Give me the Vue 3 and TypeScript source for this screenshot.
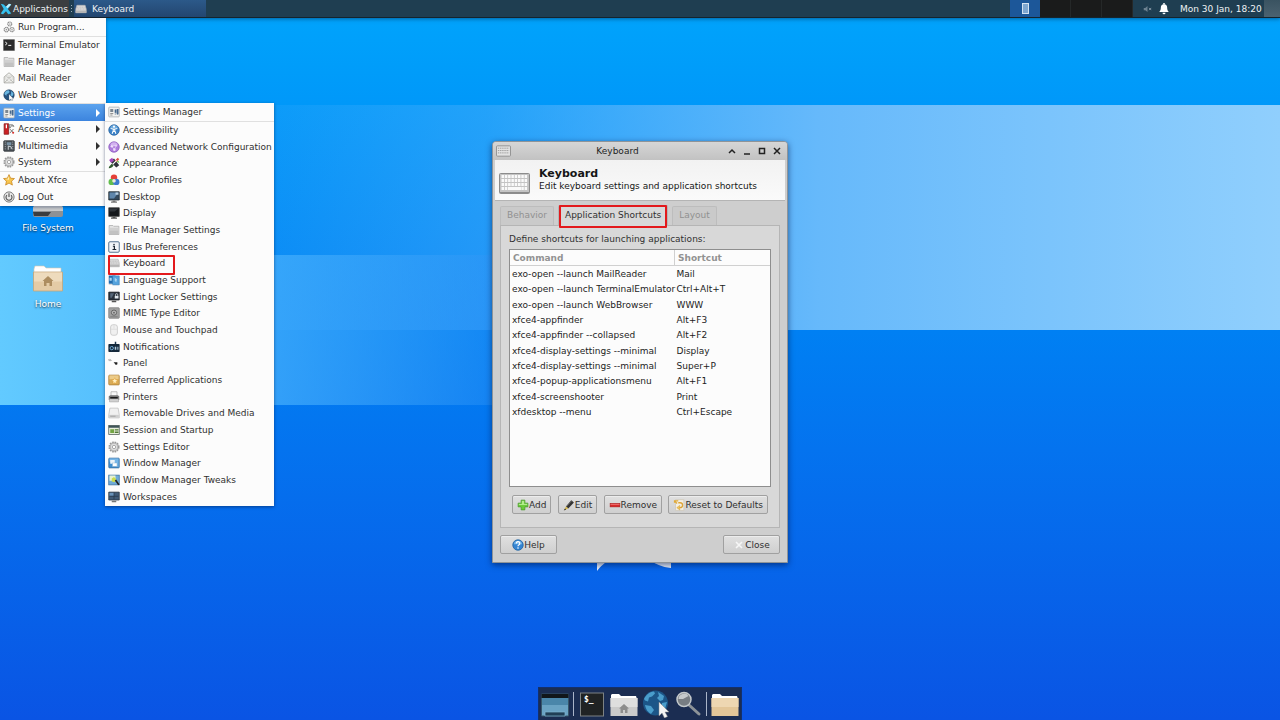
<script setup lang="ts">
import { ref } from 'vue'

interface MenuEntry {
  label: string
  icon: string
  submenu?: boolean
  divider?: boolean
  marked?: boolean
}

const folder = '<path d="M1.500 2h5l1 1h7v11h-13z" fill="#e4e4e4" stroke="#a9a9a9"/><path d="M2 5h12v8.500H2z" fill="#d0d0d0"/><path d="M2 9h12v4.500H2z" fill="#c2c2c2"/>'
const gear = '<circle cx="8" cy="8" r="6.2" fill="#e2e2e2" stroke="#9a9a9a" stroke-width="2.4" stroke-dasharray="2.2 1.05"/><circle cx="8" cy="8" r="5.2" fill="#dedede" stroke="#a5a5a5"/><circle cx="8" cy="8" r="2.2" fill="#fff" stroke="#959595"/>'
const screen = '<path d="M1 1h14v11H1z" fill="#34495c" stroke="#1c252e"/><path d="M2 2h12L8 10H2z" fill="#5f86ab"/><path d="M10 2h4v3h-4z" fill="#b9cfe2"/><path d="M6 12.500h4v1.500h2v1.500H4V14h2z" fill="#777"/>'
const settings = '<rect x="1" y="1.500" width="14" height="13" rx="1" fill="#f2f2f0" stroke="#a3a8ac"/><path d="M3 4h4v4H3z" fill="#7c8792"/><path d="M9 4h1.500v8H9zM12 4h1.500v8H12z" fill="#a9b6c4"/><path d="M9 5h2v4H9zM11.500 4h2.500v7h-2.500z" fill="#46698f"/><path d="M3 10h4M3 12h3" stroke="#888" stroke-width="1.200"/>'
const keyboard = '<path d="M2.500 3h11l1.500 5v5H1V8z" fill="#dcdcdc" stroke="#b0b0b0" stroke-width=".8"/><path d="M2.500 5.500h11M2 8h12" stroke="#b8b8b8" stroke-width="1.200" stroke-dasharray="1.500 .7"/><path d="M1 10h14v3H1z" fill="#b5b5b5"/>'
const globe = '<circle cx="8" cy="8" r="7" fill="#25527f" stroke="#173653" stroke-width=".7"/><path d="M2 5.500C3 3 5 1.800 7.500 1.700L9 4 7 6l-2 .5L4.500 9 2 7zM10.500 2.500l3.500 3-.5 3-2 1-1.500-2 1-2z" fill="#69b5df"/><path d="M8 7l6 6-2.500.2L13 15.500l-1.500.5-1.300-2.500L8 15z" fill="#fff" stroke="#567" stroke-width=".4"/>'
const windows = '<rect x="1" y="1.500" width="14" height="13" rx="1" fill="#3f8fd0" stroke="#3c6e9d"/><path d="M2 2h12v12L2 6z" fill="#76b5e6"/><rect x="3" y="4" width="6" height="5" fill="#e9f2f9"/><rect x="6" y="8" width="6" height="4.500" fill="#fff" stroke="#8bb2d3" stroke-width=".6"/>'

const icons: Record<string, string> = {
  folder, gear, screen, settings, keyboard, globe, windows,
  run: '<circle cx="9" cy="4" r="2.700" fill="#eee" stroke="#8e8e8e" stroke-width="1.500" stroke-dasharray="1.700 .5"/><circle cx="4.500" cy="11.500" r="3" fill="#eee" stroke="#8e8e8e" stroke-width="1.500" stroke-dasharray="1.700 .5"/><circle cx="12" cy="11.500" r="2.800" fill="#eee" stroke="#8e8e8e" stroke-width="1.500" stroke-dasharray="1.700 .5"/><circle cx="9" cy="4" r=".8" fill="#888"/><circle cx="4.500" cy="11.500" r=".9" fill="#888"/><circle cx="12" cy="11.500" r=".8" fill="#888"/>',
  terminal: '<rect x=".5" y=".5" width="15" height="15" rx="1" fill="#2b2b2b" stroke="#777"/><path d="M3 4l2.500 2L3 8M7 8.500h4" fill="none" stroke="#fff" stroke-width="1.300"/>',
  mail: '<path d="M1.500 6.500L8 1l6.500 5.500v8h-13z" fill="#f3f3f0" stroke="#9b9b96"/><path d="M4 5.500h8v5l-4 2-4-2z" fill="#fff" stroke="#b5b5b0" stroke-width=".8"/><path d="M1.500 14.500L6.500 10M14.500 14.500L9.500 10M5.500 7.500h5M6 9.200h4" stroke="#a8a8a3"/>',
  accessories: '<path d="M1.500 1h6v14h-6z" fill="#cb1f23" stroke="#861517"/><path d="M4.500 2v5" stroke="#fff" stroke-width="1.700"/><path d="M8 2.500h5l1.500 2-3-1L9 7zM9 8l5 5M14 8l-5 5.500" fill="none" stroke="#777" stroke-width="1.300"/><circle cx="13.500" cy="13" r="1.400" fill="#d6322c"/>',
  multimedia: '<rect x="1" y="1" width="14" height="14" rx="1" fill="#4a5056" stroke="#2d3135"/><path d="M3 2v12M13 2v12" stroke="#9ea5ab" stroke-width="1.300" stroke-dasharray="1.500 1.500"/><rect x="5" y="3" width="6" height="4" fill="#7891a5"/><path d="M7 13V8l4 1.200v3" fill="none" stroke="#dde3e8" stroke-width="1.200"/>',
  star: '<path d="M8 .8l2.100 4.800 5.200.5-3.900 3.500 1.100 5.200L8 12.100l-4.500 2.700 1.100-5.200L.7 6.100l5.200-.5z" fill="#f8c64f" stroke="#c78318"/><path d="M8 2.500v5L3 6.800l3.500-.5z" fill="#fff2bb"/>',
  power: '<circle cx="8" cy="8" r="6.800" fill="#e8e8e8" stroke="#6d6d6d" stroke-width="1.200"/><path d="M5.200 5.500a4 4 0 1 0 5.600 0M8 3v5" fill="none" stroke="#555" stroke-width="1.500"/>',
  access: '<circle cx="8" cy="8" r="7" fill="#3b83c8" stroke="#27629d"/><path d="M3 4.500a6 6 0 0 1 10 0L8 7z" fill="#70addf"/><circle cx="8" cy="3.500" r="1.400" fill="#fff"/><path d="M3.500 6l3.500.8v2L5.500 13M12.500 6L9 6.800v2l1.500 4.200M7 7h2v3H7z" fill="none" stroke="#fff" stroke-width="1.400"/>',
  network: '<circle cx="8" cy="8" r="7" fill="#ad7bdc" stroke="#8c5dbc"/><path d="M3 4.500a6 6 0 0 1 10 0L8 7z" fill="#d3b2ef"/><circle cx="5" cy="7" r="1.600" fill="#eedcfb"/><circle cx="11" cy="6" r="1.500" fill="#e0c5f5"/><circle cx="8.500" cy="11.500" r="1.700" fill="#eedcfb"/><path d="M5 7l6-1-2.500 5.500z" fill="none" stroke="#f0e3fa" stroke-width=".8"/>',
  appearance: '<path d="M3 6l5-4 7 9-4 3z" fill="#30333a"/><path d="M1.500 4l4-3 2.500 4-4 2.500z" fill="#a548bd"/><path d="M9 5l4-4 2 2-4 4z" fill="#d84a42"/><path d="M11 6l3-1 1 3z" fill="#6cc04a"/><path d="M1 15c0-3 2-3 4-6l2.500 2c-2 3-3 4-6.500 4z" fill="#2f5a2c"/><path d="M6.500 9.500l5-5" stroke="#fff" stroke-width="1.500"/>',
  color: '<circle cx="8" cy="5" r="4.300" fill="#e64038"/><circle cx="5" cy="10.500" r="4.300" fill="#62be4c"/><circle cx="11" cy="10.500" r="4.300" fill="#3d7bd0"/><path d="M6 7.500a3 3 0 0 1 4 0 3 3 0 0 1-2 4 3 3 0 0 1-2-4z" fill="#efe9dc"/>',
  display: '<path d="M1 1h14v11.500H1z" fill="#15181c" stroke="#3d3d3d"/><path d="M2 2h12L9 6H2z" fill="#30353b"/><path d="M6 13h4v1h2v1.500H4V14h2z" fill="#555"/>',
  ibus: '<rect x="1" y="1" width="14" height="14" rx="1.500" fill="#f1f4f8" stroke="#52708e" stroke-width="1.300"/><path d="M6.500 7h2v4M6 11.300h5" fill="none" stroke="#18222d" stroke-width="1.600"/><circle cx="8" cy="4.800" r="1" fill="#18222d"/>',
  language: '<path d="M1 2h9v11H1z" fill="#236cae"/><path d="M6 2.500h9v12H6z" fill="#55a3dd" stroke="#2f75ac" stroke-width=".7"/><path d="M2 5h3v4H2zM9 5l3 2-1 4-2-2z" fill="#a9d6f3"/><path d="M1 14h5" stroke="#ccc"/>',
  locker: '<path d="M1 1.500h14V12H1z" fill="#2a333d" stroke="#15191e"/><path d="M3 3h5l-3 6H3z" fill="#566779"/><path d="M9 6.500h5V10H9z" fill="#e2e8ed"/><path d="M10 6.500V5a1.500 1.500 0 0 1 3 0v1.500" fill="none" stroke="#e2e8ed"/><path d="M5 14h6" stroke="#555" stroke-width="2"/>',
  mime: '<rect x="1" y="1" width="14" height="14" rx="1" fill="#a0a0a0" stroke="#7c7c7c"/><circle cx="8" cy="7.500" r="3.500" fill="#b9b9b9" stroke="#636363" stroke-width="1.300"/><circle cx="8" cy="7.500" r="1.200" fill="#626262"/><path d="M3 13h10" stroke="#777"/>',
  mouse: '<rect x="3.500" y="1" width="9" height="14" rx="3" fill="#f0f0f0" stroke="#c2c2c2"/><path d="M8 2v4M4 7h8" stroke="#dadada"/>',
  notifications: '<rect x=".5" y="4" width="15" height="10.500" rx="1" fill="#14283a"/><path d="M9 1h2v3H9z" fill="#183149"/><circle cx="5" cy="9.500" r="2.200" fill="none" stroke="#6faad6" stroke-width="1.300"/><path d="M9 7.500h2v4H9zM12.500 7.500h1.300v4h-1.300z" fill="#b3d0e4"/>',
  panel: '<path d="M0 4c2-1.500 4-1 5 1" fill="none" stroke="#aaa"/><rect x="1" y="4" width="3" height="1.500" fill="#bbb"/><path d="M7.500 7h5v2.500l-2 1z" fill="#202020"/>',
  preferred: '<rect x="1" y="1.500" width="14" height="13" rx="1" fill="#d8ab58" stroke="#ab7f35"/><path d="M2 2h12v5H2z" fill="#eccb88"/><path d="M9 5l1.200 2.500 2.800.4-2 2 .5 2.900L9 11.500l-2.500 1.300.5-2.900-2-2 2.800-.4z" fill="#fff0c4" stroke="#e1951e" stroke-width=".6"/>',
  printer: '<path d="M4 1h8v6H4z" fill="#f8f8f8" stroke="#aaa"/><path d="M1 7l2-1.500h10L15 7v5H1z" fill="#777"/><path d="M2 10.500h12v4H2z" fill="#d1d1d1" stroke="#999" stroke-width=".7"/><path d="M3 9h10" stroke="#181818" stroke-width="2"/>',
  drive: '<path d="M2.500 1.500h11L15 10.500v4H1v-4z" fill="#f0f0f0" stroke="#bdbdbd"/><path d="M1.500 10.500h13v3.500h-13z" fill="#cfcfcf"/><path d="M3 12.300h7" stroke="#999"/>',
  session: '<rect x="1" y="2" width="14" height="12" fill="#e7edd9" stroke="#4d5b55"/><path d="M1 2h14v3H1z" fill="#3e5358"/><path d="M3 7h5v5H3z" fill="#72a443"/><path d="M9 7h5v1.500H9zM9 10h5v2H9z" fill="#527939"/>',
  tweaks: '<rect x="1" y="1.500" width="14" height="13" fill="#6eabd8" stroke="#3a6f9f"/><path d="M2 2h8v7H2z" fill="#e8f2d0"/><path d="M5 6l3-2 3 3-2 4-4-1z" fill="#c9db4c"/><path d="M10 8l4.500 6.500" stroke="#222" stroke-width="2.300"/>',
  workspaces: '<path d="M1 1.500h14v10.500H1z" fill="#405a75" stroke="#25313c"/><path d="M2 2.500h6v4H2z" fill="#6992b8"/><path d="M8 2v9M2 7h12" stroke="#24384b"/><path d="M5 14h6" stroke="#777" stroke-width="2"/>',
  add: '<path d="M5.500 1.500h5v4h4v5h-4v4h-5v-4h-4v-5h4z" fill="#6ccb3b" stroke="#4b9a2d"/><path d="M6.500 2.500h3v4h4v1.500h-11V6.500h4z" fill="#b1ec8a"/>',
  edit: '<path d="M4 10L11 1.500l3.500 3L7 12.500z" fill="#333"/><path d="M5 9.500l6.500-7" stroke="#777"/><path d="M1.500 15l2.500-5 3 2.500z" fill="#d6b84b"/><path d="M1 15.300l1.700-2.600 1.500 1.200z" fill="#222"/>',
  remove: '<rect x="1.500" y="6" width="13" height="4.500" fill="#d92a2a" stroke="#a81c1c" stroke-width=".8"/><path d="M2 7.300h12" stroke="#f28080"/>',
  reset: '<rect x="3.500" y="1" width="11" height="14" fill="#f4f0e6" stroke="#cfc8b8"/><path d="M2 5V2.500h5M2 2.500l3.500 3.500" fill="none" stroke="#e0aa38" stroke-width="1.600"/><path d="M7 5h2.500a2.500 2.500 0 0 1 0 6.500H8" fill="none" stroke="#dda53a" stroke-width="1.800"/><path d="M9 8.500v6L5 11.500z" fill="#f0c55c" stroke="#d29a27" stroke-width=".6"/>',
  help: '<circle cx="8" cy="8" r="7" fill="#3484d2" stroke="#1e609f"/><path d="M2.500 7a5.600 5.600 0 0 1 11 0z" fill="#76b7ec"/><path d="M5.800 6a2.300 2.300 0 1 1 3.200 2c-.8.400-1 .8-1 1.500" fill="none" stroke="#fff" stroke-width="1.600"/><circle cx="8" cy="12" r="1.100" fill="#fff"/>',
  cross: '<path d="M4 4l8 8M12 4l-8 8" stroke="#f6f6f6" stroke-width="2.200"/>',
}

const mainMenu: MenuEntry[] = [
  { label: 'Run Program...', icon: 'run', divider: true },
  { label: 'Terminal Emulator', icon: 'terminal' },
  { label: 'File Manager', icon: 'folder' },
  { label: 'Mail Reader', icon: 'mail' },
  { label: 'Web Browser', icon: 'globe', divider: true },
  { label: 'Settings', icon: 'settings', submenu: true },
  { label: 'Accessories', icon: 'accessories', submenu: true },
  { label: 'Multimedia', icon: 'multimedia', submenu: true },
  { label: 'System', icon: 'gear', submenu: true, divider: true },
  { label: 'About Xfce', icon: 'star' },
  { label: 'Log Out', icon: 'power' },
]

const settingsMenu: MenuEntry[] = [
  { label: 'Settings Manager', icon: 'settings', divider: true },
  { label: 'Accessibility', icon: 'access' },
  { label: 'Advanced Network Configuration', icon: 'network' },
  { label: 'Appearance', icon: 'appearance' },
  { label: 'Color Profiles', icon: 'color' },
  { label: 'Desktop', icon: 'screen' },
  { label: 'Display', icon: 'display' },
  { label: 'File Manager Settings', icon: 'folder' },
  { label: 'IBus Preferences', icon: 'ibus' },
  { label: 'Keyboard', icon: 'keyboard', marked: true },
  { label: 'Language Support', icon: 'language' },
  { label: 'Light Locker Settings', icon: 'locker' },
  { label: 'MIME Type Editor', icon: 'mime' },
  { label: 'Mouse and Touchpad', icon: 'mouse' },
  { label: 'Notifications', icon: 'notifications' },
  { label: 'Panel', icon: 'panel' },
  { label: 'Preferred Applications', icon: 'preferred' },
  { label: 'Printers', icon: 'printer' },
  { label: 'Removable Drives and Media', icon: 'drive' },
  { label: 'Session and Startup', icon: 'session' },
  { label: 'Settings Editor', icon: 'gear' },
  { label: 'Window Manager', icon: 'windows' },
  { label: 'Window Manager Tweaks', icon: 'tweaks' },
  { label: 'Workspaces', icon: 'workspaces' },
]

const shortcuts: [string, string][] = [
  ['exo-open --launch MailReader', 'Mail'],
  ['exo-open --launch TerminalEmulator', 'Ctrl+Alt+T'],
  ['exo-open --launch WebBrowser', 'WWW'],
  ['xfce4-appfinder', 'Alt+F3'],
  ['xfce4-appfinder --collapsed', 'Alt+F2'],
  ['xfce4-display-settings --minimal', 'Display'],
  ['xfce4-display-settings --minimal', 'Super+P'],
  ['xfce4-popup-applicationsmenu', 'Alt+F1'],
  ['xfce4-screenshooter', 'Print'],
  ['xfdesktop --menu', 'Ctrl+Escape'],
]

const tabs = ['Behavior', 'Application Shortcuts', 'Layout']
const activeTab = ref('Application Shortcuts')
const actions = [
  { label: 'Add', icon: 'add' },
  { label: 'Edit', icon: 'edit' },
  { label: 'Remove', icon: 'remove' },
  { label: 'Reset to Defaults', icon: 'reset' },
]
const keyRows = [4, 8, 12, 16]
</script>

<template>
  <div class="desktop">
    <header class="panel">
      <button class="apps" type="button">
        <svg class="ico" viewBox="0 0 16 16" aria-hidden="true">
          <path d="M1 1l4 1 3 3 4-4 3 1-4.500 6L15 14l-4 1-3-4-4 4-3-1 4-6z" fill="#35c0ee" />
          <path d="M8 5l4-4 3 1-5 5z" fill="#c7effb" />
        </svg>
        Applications
      </button>
      <span class="grip"></span>
      <button class="task" type="button">
        <svg class="ico" viewBox="0 0 16 16" aria-hidden="true" v-html="icons.keyboard"></svg>
        Keyboard
      </button>
      <div class="spacer"></div>
      <div class="pager">
        <button class="space current" type="button" aria-label="Workspace 1"><i></i></button>
        <button v-for="n in 3" :key="n" class="space" type="button" :aria-label="`Workspace ${n + 1}`"></button>
      </div>
      <div class="tray">
        <svg class="ico" viewBox="0 0 16 16" aria-hidden="true">
          <path d="M5 6.500h2l3-2.500v8L7 9.500H5z" fill="#6c8190" />
          <path d="M12 6.500l3 3M15 6.500l-3 3" stroke="#8496a2" stroke-width="1.300" />
        </svg>
        <svg class="ico" viewBox="0 0 16 16" aria-hidden="true">
          <path d="M8 1.500c3 0 4.200 2 4.200 4.500 0 3 .8 4.500 2.300 6h-13c1.500-1.500 2.300-3 2.300-6C3.800 3.500 5 1.500 8 1.500z" fill="#fff" />
          <path d="M6 13h4a2 2 0 0 1-4 0zM7 0h2v2H7z" fill="#fff" />
        </svg>
      </div>
      <time class="clock">Mon 30 Jan, 18:20</time>
      <span class="user"></span>
    </header>

    <main class="stage">
      <svg class="ears" viewBox="0 0 80 12" aria-hidden="true">
        <path d="M5 0h14C12 4 9 7 5 12z" fill="#eef4fc" />
        <path d="M56 0h23v9C70 8 63 5 56 0z" fill="#eef4fc" />
      </svg>

      <a class="shortcut filesystem" href="#filesystem">
        <svg viewBox="0 0 32 32" aria-hidden="true">
          <path d="M5 4h22l4 19H1z" fill="#dcdcdc" />
          <path d="M1 24h30v5a2 2 0 0 1-2 2H3a2 2 0 0 1-2-2z" fill="#8d9195" />
          <path d="M1 21h30v4H1z" fill="#c8cacb" />
          <path d="M1 26h18l-3 4H2z" fill="#3a3d40" />
        </svg>
        <span>File System</span>
      </a>
      <a class="shortcut home" href="#home">
        <svg viewBox="0 0 32 32" aria-hidden="true">
          <path d="M2 7l1-3h9l2 2h15v5H2z" fill="#fff" stroke="#d8c8b0" stroke-width=".6" />
          <path d="M1.500 10h29v19h-29z" fill="#e4cba6" stroke="#c4a679" stroke-width=".8" />
          <path d="M2 10.500h28v9H2z" fill="#eedbbd" />
          <path d="M16 14l5.500 5H20v5h-2.500v-3h-3v3H12v-5h-1.500z" fill="#ad8d60" />
        </svg>
        <span>Home</span>
      </a>

      <nav class="menu main-menu" aria-label="Applications">
        <button
          v-for="item in mainMenu"
          :key="item.label"
          type="button"
          class="entry"
          :class="{ selected: item.label === 'Settings', divider: item.divider }"
        >
          <svg class="ico" viewBox="0 0 16 16" aria-hidden="true" v-html="icons[item.icon]"></svg>
          <span>{{ item.label }}</span>
          <i v-if="item.submenu" class="arrow"></i>
        </button>
      </nav>

      <nav class="menu sub-menu" aria-label="Settings">
        <button
          v-for="item in settingsMenu"
          :key="item.label"
          type="button"
          class="entry"
          :class="{ marked: item.marked, divider: item.divider }"
        >
          <svg class="ico" viewBox="0 0 16 16" aria-hidden="true" v-html="icons[item.icon]"></svg>
          <span>{{ item.label }}</span>
        </button>
      </nav>

      <section class="window" aria-label="Keyboard">
        <div class="titlebar">
          <svg class="title-icon" viewBox="0 0 16 12" aria-hidden="true">
            <rect x=".5" y=".5" width="15" height="11" rx="1" fill="#e2e2e2" stroke="#8f8f8f" />
            <path d="M2 3h12M2 5.500h12M2 8h12" stroke="#9b9b9b" stroke-dasharray="1.500 .8" />
          </svg>
          <span class="title">Keyboard</span>
          <button type="button" aria-label="Shade"><svg viewBox="0 0 10 10"><path d="M2 7l3-3 3 3" /></svg></button>
          <button type="button" aria-label="Minimize"><svg viewBox="0 0 10 10"><path d="M2 8h6" /></svg></button>
          <button type="button" aria-label="Maximize"><svg viewBox="0 0 10 10"><path d="M2.500 2.500h5v5h-5z" /></svg></button>
          <button type="button" aria-label="Close window"><svg viewBox="0 0 10 10"><path d="M2 2l6 6M8 2L2 8" /></svg></button>
        </div>

        <div class="banner">
          <svg viewBox="0 0 32 24" aria-hidden="true">
            <rect x=".5" y="2.500" width="30" height="20" rx="1" fill="#c4c4c4" stroke="#8c8c8c" />
            <path d="M1 21.500h29" stroke="#8a8a8a" />
            <path v-for="y in keyRows" :key="y" :d="`M2.500 ${y + 1.5}h26`" stroke="#fafafa" stroke-width="3" stroke-dasharray="2.500 .8" />
            <path d="M9 17.500h13" stroke="#fafafa" stroke-width="3" />
          </svg>
          <div>
            <h1>Keyboard</h1>
            <p>Edit keyboard settings and application shortcuts</p>
          </div>
        </div>

        <div class="body">
          <div class="tabs" role="tablist">
            <button
              v-for="tab in tabs"
              :key="tab"
              type="button"
              role="tab"
              :aria-selected="tab === activeTab"
              :class="{ active: tab === activeTab }"
              @click="activeTab = tab"
            >{{ tab }}</button>
          </div>
          <div class="page" role="tabpanel">
            <p class="hint">Define shortcuts for launching applications:</p>
            <div class="list">
              <table>
                <thead>
                  <tr><th class="command">Command</th><th>Shortcut</th></tr>
                </thead>
                <tbody>
                  <tr v-for="(row, i) in shortcuts" :key="i">
                    <td>{{ row[0] }}</td><td>{{ row[1] }}</td>
                  </tr>
                </tbody>
              </table>
            </div>
            <div class="actions">
              <button v-for="a in actions" :key="a.label" type="button" class="btn">
                <svg class="ico" viewBox="0 0 16 16" aria-hidden="true" v-html="icons[a.icon]"></svg>{{ a.label }}
              </button>
            </div>
          </div>
          <div class="footer">
            <button type="button" class="btn wide">
              <svg class="ico" viewBox="0 0 16 16" aria-hidden="true" v-html="icons.help"></svg>Help
            </button>
            <button type="button" class="btn wide">
              <svg class="ico" viewBox="0 0 16 16" aria-hidden="true" v-html="icons.cross"></svg>Close
            </button>
          </div>
        </div>
      </section>

      <nav class="dock" aria-label="Dock">
        <button type="button" aria-label="Show desktop">
          <svg viewBox="0 0 28 28">
            <path d="M.5 4h27v22H.5z" fill="#6aa3c4" stroke="#36566a" />
            <path d="M.5 4h27v4H.5z" fill="#11171b" />
            <path d="M1 8h26v7H1z" fill="#4a86aa" />
            <path d="M4 26v-4h20v4z" fill="#203f56" stroke="#7fb4d1" stroke-width=".7" />
          </svg>
        </button>
        <i class="rule"></i>
        <button type="button" aria-label="Terminal">
          <svg viewBox="0 0 28 28">
            <rect x="2.500" y="3" width="23" height="23" fill="#202324" stroke="#7d8283" />
            <text x="6" y="12" font-family="DejaVu Sans Mono, monospace" font-size="8" font-weight="700" fill="#fff">$_</text>
          </svg>
        </button>
        <button type="button" aria-label="Files">
          <svg viewBox="0 0 28 28">
            <path d="M1 9V5l1-1h7l2 2h15l1 3z" fill="#fff" />
            <path d="M.5 8h27v18H.5z" fill="#cacaca" />
            <path d="M.5 8h27v9H.5z" fill="#dedede" />
            <path d="M14 14l5 4.500h-1.500V23h-2.500v-3h-2v3h-2.500v-4.500H9z" fill="#8d8d8d" />
          </svg>
        </button>
        <button type="button" aria-label="Web browser">
          <svg viewBox="0 0 28 28">
            <circle cx="13.500" cy="13" r="12.500" fill="#1c5688" />
            <path d="M2 9C4 5 7 2 12 1.500l1 2-3 3-3 1-1 4-3-1zM16 2l6 4-1 4-3 1-3-3 2-2zM3 15l6 1 3 4-3 4C6 22 4 20 3 15zM20 13l5-1-2 7-3-2z" fill="#4a9dcb" />
            <path d="M17 12v14l3-3 2.500 5 3-1.500-2.500-4.500h4z" fill="#f4f4f4" stroke="#888" stroke-width=".5" />
          </svg>
        </button>
        <button type="button" aria-label="Application finder">
          <svg viewBox="0 0 28 28">
            <path d="M15 15l10 9" stroke="#8d9398" stroke-width="3" stroke-linecap="round" />
            <circle cx="10" cy="9.500" r="7" fill="#777d83" stroke="#c4c9cc" stroke-width="1.500" />
            <path d="M4.500 9a5.500 5.500 0 0 1 10-3L9 9z" fill="#c5c9cc" />
          </svg>
        </button>
        <i class="rule"></i>
        <button type="button" aria-label="Home folder">
          <svg viewBox="0 0 28 28">
            <path d="M1 9V5l1-1h7l2 2h15l1 3z" fill="#fff" />
            <path d="M.5 8h27v18H.5z" fill="#e3c698" />
            <path d="M.5 8h27v9H.5z" fill="#eed7b2" />
          </svg>
        </button>
      </nav>
    </main>
  </div>
</template>

<style>
body {
  margin: 0;
}
</style>

<style scoped>
.desktop {
  display: flex;
  flex-direction: column;
  min-height: 100vh;
  overflow: hidden;
  font: 9px/12px "DejaVu Sans", sans-serif;
  color: #303030;
  background:
    linear-gradient(90deg, #62caff 0, #55bffd 9%, rgba(70, 175, 252, 0.7) 22%, rgba(50, 150, 246, 0.4) 38%, rgba(20, 140, 246, 0) 56%) 0 255px / 100% 150px no-repeat,
    linear-gradient(90deg, rgba(140, 203, 252, 0) 10%, rgba(110, 185, 252, 0.1) 21%, rgba(100, 182, 252, 0.35) 38%, #66b9fb 64%, #90cffd 100%) 0 105px / 100% 225px no-repeat,
    linear-gradient(180deg, #00a5fc 0, #0098f9 105px, #0080f3 330px, #0473ef 450px, #0a54e4 100%);
}

button {
  margin: 0;
  padding: 0;
  border: 0;
  background: none;
  color: inherit;
  font: inherit;
  white-space: nowrap;
}

p,
h1 {
  margin: 0;
}

svg {
  display: block;
}

.ico {
  flex: none;
  width: 12px;
  height: 12px;
}

.panel {
  position: relative;
  display: flex;
  align-items: stretch;
  height: 17px;
  border-bottom: 1px solid #14242e;
  box-shadow: 0 1px 4px rgba(0, 30, 60, 0.5);
  background: #1f3e51;
  color: #eef1f3;
}

.apps {
  display: flex;
  align-items: center;
  gap: 1px;
  width: 69px;
  background: #3b3e40;
}

.grip {
  width: 1px;
  margin: 5px 2px;
  background: repeating-linear-gradient(#9fb0ba 0 1px, transparent 1px 3px);
}

.task {
  display: flex;
  align-items: center;
  gap: 5px;
  width: 132px;
  padding-left: 1px;
  background: linear-gradient(#2c5989, #234670);
}

.spacer {
  flex: 1;
}

.pager {
  display: flex;
}

.space {
  display: flex;
  align-items: center;
  justify-content: center;
  width: 31px;
  border-right: 1px solid #252828;
  background: #1a1b1b;
}

.space.current {
  width: 30px;
  border: 0;
  background: #1c5799;
}

.space i {
  width: 5px;
  height: 9px;
  border: 1px solid #d4e2f0;
  background: #7ea6cf;
}

.tray {
  display: flex;
  align-items: center;
  gap: 6px;
  padding: 0 10px 0 7px;
}

.clock {
  width: 84px;
  line-height: 18px;
  white-space: nowrap;
}

.user {
  width: 16px;
  background: linear-gradient(#3a5361, #4b6270);
}

.stage {
  position: relative;
  flex: 1;
  display: flex;
  justify-content: center;
  align-items: flex-start;
  padding-top: 123px;
}

.ears {
  position: absolute;
  top: 541px;
  left: 50%;
  width: 80px;
  margin-left: -48px;
}

.shortcut {
  position: absolute;
  left: 13px;
  display: flex;
  flex-direction: column;
  align-items: center;
  gap: 4px;
  width: 70px;
  color: #fff;
  text-decoration: none;
  text-shadow: 0 1px 2px #123;
}

.shortcut svg {
  width: 32px;
  height: 32px;
}

.filesystem {
  top: 168px;
}

.home {
  top: 244px;
}

.menu {
  position: absolute;
  z-index: 2;
  display: flex;
  flex-direction: column;
  box-sizing: border-box;
  padding: 1px 0;
  background: #fcfcfc;
  box-shadow: 0 1px 3px rgba(0, 20, 60, 0.5);
}

.main-menu {
  top: 0;
  left: 0;
  width: 106px;
  min-height: 188px;
}

.sub-menu {
  top: 85px;
  left: 105px;
  width: 169px;
  min-height: 403px;
}

.entry {
  position: relative;
  flex: 1;
  display: flex;
  align-items: center;
  gap: 3px;
  padding-left: 3px;
  text-align: left;
}

.entry.divider {
  border-bottom: 1px solid #e0e0e0;
}

.entry.selected {
  background: linear-gradient(#5ba3ee, #3c84de);
  color: #fff;
}

.arrow {
  margin: 0 6px 0 auto;
  border: solid transparent;
  border-width: 4px 0 4px 4px;
  border-left-color: currentColor;
}

.entry.marked::after {
  content: "";
  position: absolute;
  inset: 0 99px -3px 3px;
  border: 2px solid #e3191c;
  border-radius: 1px;
}

.window {
  position: relative;
  z-index: 1;
  box-sizing: border-box;
  width: 296px;
  border: 1px solid #8f9498;
  border-radius: 4px 4px 0 0;
  background: #cecece;
  box-shadow: 0 2px 6px rgba(0, 20, 70, 0.6);
}

.titlebar {
  display: flex;
  align-items: center;
  height: 18px;
  padding: 0 3px;
  border-radius: 3px 3px 0 0;
  background: linear-gradient(#d6d6d6, #c2c2c2);
}

.title-icon {
  width: 15px;
  height: 12px;
}

.title {
  flex: 1;
  text-align: center;
  color: #1e1e1e;
}

.titlebar button {
  width: 15px;
}

.titlebar button svg {
  width: 10px;
  height: 10px;
  margin: 0 auto;
  fill: none;
  stroke: #222;
  stroke-width: 1.5;
}

.banner {
  display: flex;
  gap: 8px;
  height: 32px;
  margin: 0 2px;
  padding: 8px 0 0 4px;
  border-bottom: 1px solid #b4b4b4;
  background: linear-gradient(#f2f2f2, #fafafa);
  color: #161616;
}

.banner svg {
  width: 32px;
  height: 24px;
  margin-top: 3px;
}

.banner h1 {
  font-size: 11px;
  line-height: 12px;
  font-weight: 700;
}

.body {
  padding: 4px 7px 8px;
}

.tabs {
  display: flex;
  align-items: flex-end;
  gap: 4px;
}

.tabs button {
  box-sizing: border-box;
  height: 19px;
  padding: 0 6px 2px;
  border: 1px solid #bdbdbd;
  border-bottom: 0;
  border-radius: 2px 2px 0 0;
  background: #cacaca;
  color: #919191;
}

.tabs .active {
  position: relative;
  height: 21px;
  margin-bottom: -1px;
  border-color: #b5b5b5;
  background: #d8d8d8;
  color: #303030;
}

.tabs .active::after {
  content: "";
  position: absolute;
  inset: -1px 0 -2px;
  border: 2px solid #e3191c;
  border-radius: 1px;
}

.page {
  padding: 7px 8px 13px;
  border: 1px solid #b5b5b5;
  background: #d8d8d8;
}

.hint {
  white-space: nowrap;
}

.list {
  box-sizing: border-box;
  min-height: 238px;
  margin-top: 4px;
  border: 1px solid #8e8e8e;
  background: #fcfcfc;
  color: #1c1c1c;
}

table {
  width: 100%;
  height: 170px;
  border-collapse: collapse;
  table-layout: fixed;
}

th {
  height: 15px;
  padding: 0 3px;
  border-bottom: 1px solid #d0d0d0;
  text-align: left;
  color: #929292;
}

th.command {
  width: 158px;
  border-right: 1px solid #d0d0d0;
}

td {
  padding: 0 0 0 2px;
  white-space: nowrap;
}

.actions {
  display: flex;
  justify-content: space-between;
  padding: 8px 3px 0;
}

.btn {
  box-sizing: border-box;
  display: flex;
  align-items: center;
  justify-content: center;
  height: 19px;
  padding: 0 4px;
  border: 1px solid #a0a0a0;
  border-radius: 2px;
  background: linear-gradient(#e0e0e0, #cfcfcf);
  box-shadow: inset 0 1px #ececec;
}

.footer {
  display: flex;
  justify-content: space-between;
  padding-top: 7px;
}

.wide {
  width: 57px;
}

.dock {
  position: absolute;
  bottom: 0;
  left: 50%;
  display: flex;
  align-items: center;
  box-sizing: border-box;
  width: 204px;
  height: 33px;
  margin-left: -102px;
  border: solid #14306b;
  border-width: 1px 1px 0;
  background: #1b2d52;
}

.dock button {
  flex: 1;
}

.dock button svg {
  width: 28px;
  height: 28px;
  margin: 0 auto;
}

.rule {
  width: 1px;
  height: 24px;
  margin: 0 2px;
  background: #a9b4c8;
}
</style>
